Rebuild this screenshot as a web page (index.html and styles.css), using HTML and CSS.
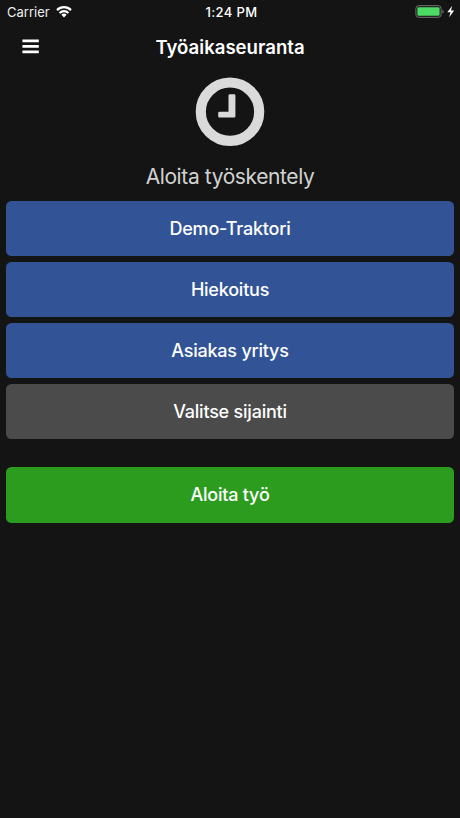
FILE: index.html
```html
<!DOCTYPE html>
<html lang="fi">
<head>
<meta charset="utf-8">
<title>Työaikaseuranta</title>
<link rel="stylesheet" href="styles.css">
</head>
<body>
<header>
  <div class="status-bar">
    <div class="carrier">
      <span>Carrier</span>
      <svg class="wifi" width="16" height="12" viewBox="0 0 16 12" aria-hidden="true">
        <path d="M1 4.1a9.9 9.9 0 0 1 14 0M3.6 6.9a6.2 6.2 0 0 1 8.8 0" fill="none" stroke="#fff" stroke-width="2.2"/>
        <path d="M8 11.4 5.4 8.8a3.7 3.7 0 0 1 5.2 0z" fill="#fff"/>
      </svg>
    </div>
    <span class="clock-text">1:24 PM</span>
    <svg class="battery" width="40" height="14" viewBox="0 0 40 14" aria-hidden="true">
      <rect x=".9" y=".7" width="25.2" height="11.6" rx="2.8" fill="none" stroke="#737573"/>
      <rect x="2.4" y="2.2" width="22.2" height="8.6" rx="1.4" fill="#4cd964"/>
      <path d="M27.4 4.7c1.7.6 1.7 3.2 0 3.8z" fill="#737573"/>
      <path d="M37.2.8 32.3 7.3h3.2l-1.3 4.9 5-6.6H36z" fill="#fff"/>
    </svg>
  </div>
  <nav class="nav-bar">
    <button class="menu" aria-label="Valikko">
      <svg width="17" height="15" viewBox="0 0 17 15"><path d="M.4 1.8h16.4M.4 7.3h16.4M.4 12.8h16.4" stroke="#fff" stroke-width="2.7"/></svg>
    </button>
    <h1>Työaikaseuranta</h1>
  </nav>
</header>
<main>
  <svg class="clock" width="70" height="70" viewBox="0 0 70 70" aria-hidden="true">
    <circle cx="35" cy="34.7" r="29.2" fill="none" stroke="#dadada" stroke-width="10.2"/>
    <path d="M34.8 17.3h4.3q1.3 0 1.3 1.3v20.6q0 1.3-1.3 1.3H24.5q-1.3 0-1.3-1.3v-3.1q0-1.3 1.3-1.3h9V18.6q0-1.3 1.3-1.3z" fill="#dadada"/>
  </svg>
  <h2>Aloita työskentely</h2>
  <div class="choices">
    <button class="choice vehicle">Demo-Traktori</button>
    <button class="choice task">Hiekoitus</button>
    <button class="choice client">Asiakas yritys</button>
    <button class="choice location">Valitse sijainti</button>
  </div>
  <button class="choice start">Aloita työ</button>
</main>
</body>
</html>
```
FILE: styles.css
```css
* { box-sizing: border-box; }

body {
  margin: 0;
  min-height: 818px;
  background: #141414;
  color: #fff;
  font-family: Inter, "Liberation Sans", sans-serif;
}

button {
  border: 0;
  padding: 0;
  background: none;
  color: inherit;
  font-family: inherit;
}

.status-bar {
  display: grid;
  grid-template-columns: 1fr auto 1fr;
  align-items: center;
  height: 24px;
  padding: 0 5px 0 7px;
  font-size: 13px;
  line-height: 24px;
}

.carrier {
  display: flex;
  align-items: center;
  gap: 6px;
  color: #eee;
}

.clock-text {
  padding-left: 1px;
  font-weight: 500;
  letter-spacing: 0.4px;
}

.battery { justify-self: end; }

.nav-bar {
  display: grid;
  grid-template-columns: 62px 1fr 62px;
  align-items: center;
  height: 46px;
}

.menu {
  display: flex;
  justify-content: center;
  padding: 0 1px 1px 0;
}

h1 {
  margin: 0;
  text-align: center;
  font-size: 18.6px;
  font-weight: 600;
  line-height: 24px;
}

main {
  display: flex;
  flex-direction: column;
  padding: 7px 6px 0;
}

.clock { align-self: center; }

h2 {
  margin: 15px 0 9.5px;
  color: #d2d2d2;
  text-align: center;
  font-size: 21px;
  font-weight: 400;
  line-height: 29px;
  letter-spacing: -0.4px;
}

.choices {
  display: grid;
  gap: 5.8px;
  margin-bottom: 27.7px;
}

.choice {
  height: 55.4px;
  padding-top: 1px;
  border-radius: 5.5px;
  background: #325497;
  font-size: 18px;
  font-weight: 500;
  line-height: 24px;
  letter-spacing: -0.22px;
}

.location { background: #4b4b4b; }

.start { background: #2c9c1f; }
```
